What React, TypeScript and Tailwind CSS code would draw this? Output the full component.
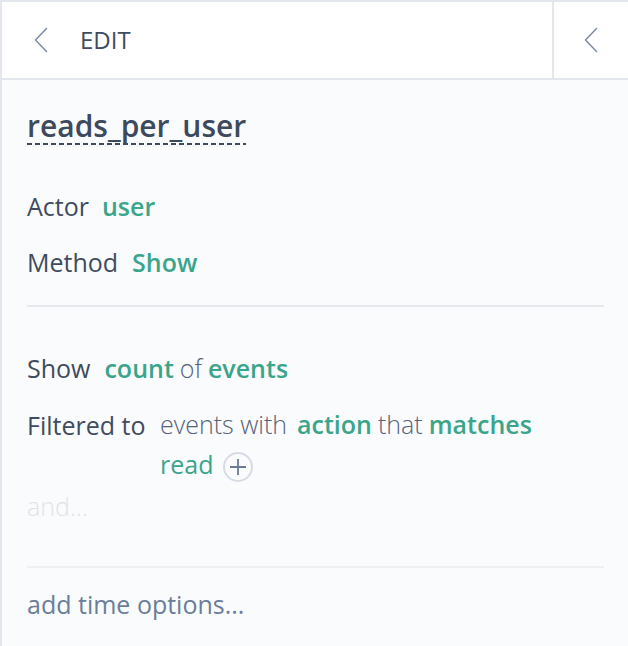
import React from "react";

const Chevron = () => (
  <svg width="14" height="26" viewBox="0 0 14 26" fill="none">
    <path d="M12.5 1.5 L1.5 13 L12.5 24.5" stroke="#7d8ba3" strokeWidth="1.5" strokeLinecap="round" strokeLinejoin="round" />
  </svg>
);

export default function App() {
  const font = { fontFamily: "'Open Sans', Lato, sans-serif" };
  return (
    <div style={font} className="w-[628px] h-[646px] bg-[#fafbfc] border-t-2 border-l-2 border-[#e3e7ed] flex flex-col overflow-hidden">
      <div className="h-[78px] shrink-0 flex bg-white border-b-2 border-[#e3e7ed]">
        <div className="flex-1 flex items-center pl-[32px]">
          <Chevron />
          <span className="ml-[32px] text-[24px] text-[#3f4b5e]">EDIT</span>
        </div>
        <div className="w-[76px] border-l-2 border-[#e3e7ed] flex items-center justify-center">
          <Chevron />
        </div>
      </div>

      <div className="px-[25px] pt-[29px] flex flex-col text-[25px] text-[#3f4b5e]">
        <div className="self-start">
          <div className="text-[30px] leading-[34px] font-semibold text-[#3d4a5e]">reads_per_user</div>
          <div className="h-[2px] w-full bg-[repeating-linear-gradient(to_right,#3d4a5e_0_5px,transparent_5px_8px)]" />
        </div>

        <div className="mt-[34px] h-[56px] flex items-center">
          <span>Actor</span>
          <span className="ml-[13px] font-semibold text-[#3aa58a]">user</span>
        </div>
        <div className="h-[56px] flex items-center">
          <span>Method</span>
          <span className="ml-[14px] font-semibold text-[#3aa58a]">Show</span>
        </div>

        <div className="mt-[14px] h-[2px] bg-[#e6eaef] w-[577px]" />

        <div className="mt-[42px] h-[40px] flex items-center">
          <span>Show</span>
          <span className="ml-[14px] font-semibold text-[#3aa58a]">count</span>
          <span className="ml-[6px] font-light text-[#56627a]">of</span>
          <span className="ml-[6px] font-semibold text-[#3aa58a]">events</span>
        </div>

        <div className="mt-[16px] flex">
          <span className="w-[133px] shrink-0 leading-[40px] whitespace-nowrap">Filtered to</span>
          <div className="flex flex-col">
            <div className="h-[40px] flex items-center whitespace-nowrap">
              <span className="font-light text-[#56627a]">events with</span>
              <span className="ml-[10px] font-semibold text-[#3aa58a]">action</span>
              <span className="ml-[6px] font-light text-[#56627a]">that</span>
              <span className="ml-[6px] font-semibold text-[#3aa58a]">matches</span>
            </div>
            <div className="h-[40px] flex items-center">
              <span className="text-[#3aa58a]">read</span>
              <span className="ml-[10px] mt-[4px] w-[30px] h-[30px] rounded-full border-2 border-[#d6dbe4] flex items-center justify-center">
                <svg width="18" height="18" viewBox="0 0 18 18">
                  <path d="M9 1 V17 M1 9 H17" stroke="#6b7a93" strokeWidth="1.8" />
                </svg>
              </span>
            </div>
          </div>
        </div>

        <div className="mt-[2px] h-[40px] flex items-center font-light text-[#dfe3ea]">and...</div>

        <div className="mt-[39px] h-[2px] bg-[#eef1f4] w-[577px]" />

        <div className="mt-[17px] h-[40px] flex items-center text-[#6b7d99]">add time options...</div>
      </div>
    </div>
  );
}
